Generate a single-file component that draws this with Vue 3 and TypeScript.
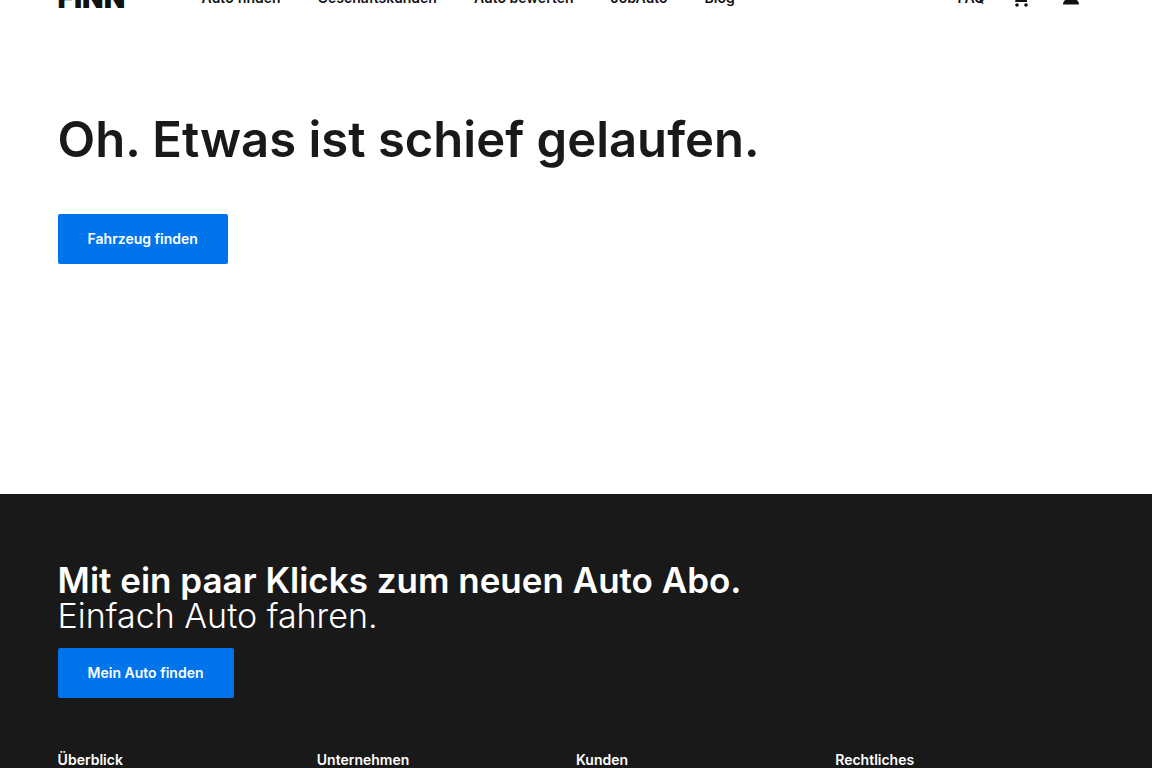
<script setup lang="ts">
interface NavItem { label: string; href: string }

const nav: NavItem[] = [
  { label: 'Auto finden', href: '#finden' },
  { label: 'Geschäftskunden', href: '#business' },
  { label: 'Auto bewerten', href: '#bewerten' },
  { label: 'JobAuto', href: '#jobauto' },
  { label: 'Blog', href: '#blog' },
]
const columns: string[] = ['Überblick', 'Unternehmen', 'Kunden', 'Rechtliches']
</script>

<template>
  <div class="page">
    <header class="header">
      <a class="logo" href="#start">FINN</a>
      <nav class="nav">
        <a v-for="item in nav" :key="item.label" :href="item.href">{{ item.label }}</a>
      </nav>
      <div class="tools">
        <a href="#faq">FAQ</a>
        <a class="icon" href="#cart" aria-label="Warenkorb">
          <svg viewBox="0 0 24 24"><path d="M3 3h3l1 2h12l-3 7H8l-1 2h10v2H5l1-4-3-7z" /><circle cx="7" cy="19" r="1.800" /><circle cx="16" cy="19" r="1.800" /></svg>
        </a>
        <a class="icon" href="#account" aria-label="Konto">
          <svg viewBox="0 0 24 24"><path d="M12 11a4 4 0 1 0 0-8 4 4 0 0 0 0 8zM4 18.500c0-3 2-5 5-6h6c3 1 5 3 5 6z" /></svg>
        </a>
      </div>
    </header>
    <main class="main">
      <h1>Oh. Etwas ist schief gelaufen.</h1>
      <button class="button" type="button">Fahrzeug finden</button>
    </main>
    <footer class="footer">
      <h2>Mit ein paar Klicks zum neuen Auto Abo.</h2>
      <p class="tagline">Einfach Auto fahren.</p>
      <button class="button" type="button">Mein Auto finden</button>
      <div class="columns">
        <h3 v-for="title in columns" :key="title">{{ title }}</h3>
      </div>
    </footer>
  </div>
</template>

<style>
body { margin: 0; }
html, body { height: 100%; overflow: hidden; }
#app { height: 100%; overflow: hidden; }
</style>

<style scoped>
.page { font-family: Inter, "Liberation Sans", sans-serif; color: #191919; background: #fff; }
.header { display: flex; align-items: center; height: 82px; margin-top: -43px; padding: 0 6% 0 5%; }
.header a { color: #111; font-size: 14px; line-height: 24px; font-weight: 600; text-decoration: none; }
.header .logo { width: 144px; font-size: 28px; font-weight: 900; }
.nav { display: flex; gap: 37px; }
.tools { display: flex; align-items: center; gap: 25px; margin-left: auto; }
.header .icon { display: flex; }
.icon svg { width: 24px; height: 24px; fill: #111; }
.main { padding: 71px 5% 230px; }
h1, h2, h3, p { margin: 0; }
h1, h2 { font-weight: 600; }
h1 { font-size: 49px; line-height: 60px; margin-bottom: 44px; }
.button { display: block; height: 50px; padding: 0 30px; border: 0; border-radius: 2px; background: #0075eb; color: #fff; font: 600 14px/24px Inter, sans-serif; cursor: pointer; }
.footer { padding: 69px 5% 80px; background: #191919; color: #fff; }
h2 { font-size: 35px; line-height: 35px; }
.tagline { font-size: 34px; line-height: 35px; font-weight: 300; margin-bottom: 15px; }
.columns { display: grid; grid-template-columns: repeat(4, 1fr); margin-top: 50px; }
h3 { font-size: 14px; line-height: 24px; font-weight: 600; }
</style>
